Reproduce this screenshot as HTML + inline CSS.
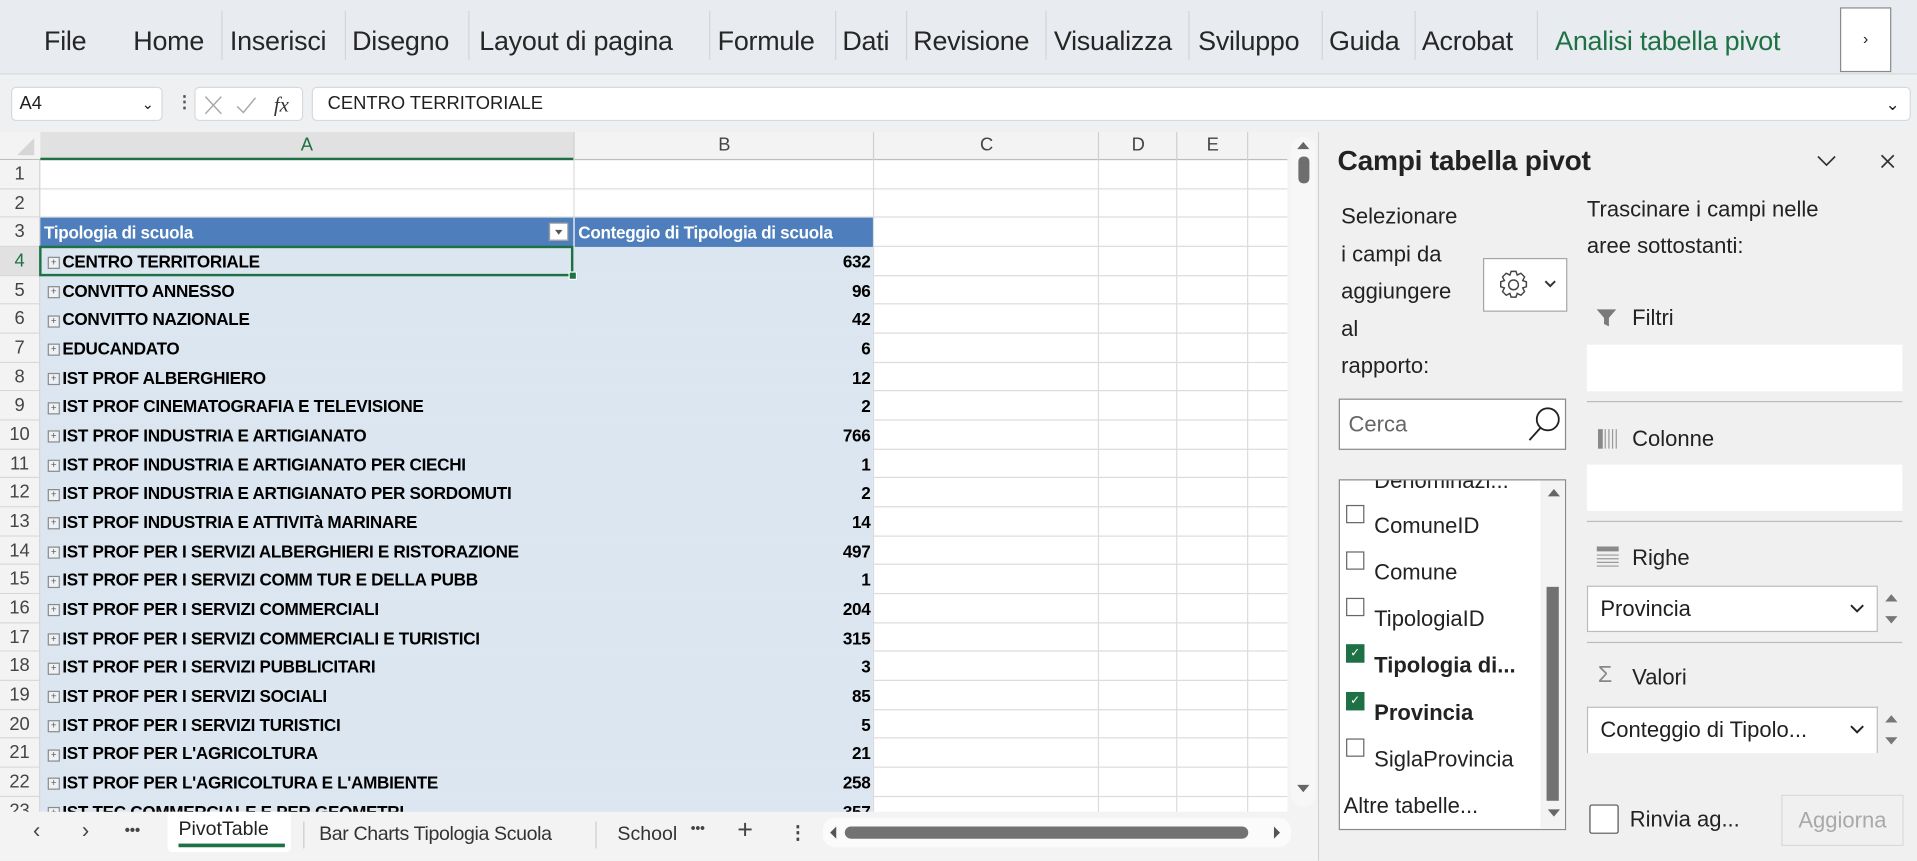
<!DOCTYPE html>
<html><head><meta charset="utf-8">
<style>
html,body{margin:0;padding:0;width:1917px;height:861px;overflow:hidden;background:#f0f0f0}
#w{position:absolute;left:0;top:0;width:1568px;height:704px;transform:scale(1.22258);transform-origin:0 0;font-family:"Liberation Sans",sans-serif;color:#1f1f1f}
.a{position:absolute}
.tab{position:absolute;top:21px;font-size:22px;color:#262626;white-space:nowrap;letter-spacing:-0.2px}
.sep{position:absolute;top:9px;width:1px;height:40px;background:#d2d5d9}
.rh{position:absolute;left:0;width:32px;text-align:center;font-size:15px;color:#444;height:23.67px;line-height:24px;border-bottom:1px solid #d8d8d8;box-sizing:border-box;background:#f3f3f3}
.gl{position:absolute;left:33px;width:1020px;height:1px;background:#dcdcdc}
.vl{position:absolute;top:131px;width:1px;height:533px;background:#dcdcdc}
.pr{position:absolute;left:33px;width:681px;height:23.67px;background:#dce6f1;box-sizing:border-box;font-weight:bold;font-size:14px;line-height:24px;letter-spacing:-0.25px;color:#000;white-space:nowrap}
.pr .p{display:inline-block;width:8px;height:8px;border:1px solid #8a8a8a;margin:0 2px 0 6px;position:relative;top:0px;background:#eef2f7;font-size:8px;line-height:8px;text-align:center;font-weight:normal;color:#555;letter-spacing:0;vertical-align:middle}
.pr .n{position:absolute;right:2px;top:0}
.pt{font-size:18px;color:#222;position:absolute;white-space:nowrap}
.cb{position:absolute;left:1101px;width:13px;height:13px;border:1px solid #666;background:#fff}
.cbc{background:#1e7145;border-color:#1e7145;color:#fff;font-size:10px;line-height:13px;text-align:center}
.fi{position:absolute;left:1124px;font-size:18px;color:#222;white-space:nowrap}
.box{position:absolute;background:#fff}
</style></head><body><div id="w">
<!-- ribbon -->
<div class="a" style="left:0;top:0;width:1568px;height:60px;background:#e8ebef;border-bottom:1px solid #d6d9dd"></div>
<div class="tab" style="left:36px">File</div>
<div class="tab" style="left:109px">Home</div><div class="sep" style="left:181px"></div>
<div class="tab" style="left:188px">Inserisci</div><div class="sep" style="left:282px"></div>
<div class="tab" style="left:288px">Disegno</div><div class="sep" style="left:383px"></div>
<div class="tab" style="left:392px">Layout di pagina</div><div class="sep" style="left:580px"></div>
<div class="tab" style="left:587px">Formule</div><div class="sep" style="left:683px"></div>
<div class="tab" style="left:689px">Dati</div><div class="sep" style="left:741px"></div>
<div class="tab" style="left:747px">Revisione</div><div class="sep" style="left:855px"></div>
<div class="tab" style="left:862px">Visualizza</div><div class="sep" style="left:972px"></div>
<div class="tab" style="left:980px">Sviluppo</div><div class="sep" style="left:1081px"></div>
<div class="tab" style="left:1087px">Guida</div><div class="sep" style="left:1157px"></div>
<div class="tab" style="left:1163px">Acrobat</div><div class="sep" style="left:1257px"></div>
<div class="tab" style="left:1272px;color:#1e7145">Analisi tabella pivot</div>
<div class="a" style="left:1505px;top:6px;width:42px;height:53px;background:#fff;border:1px solid #8a8a8a;box-sizing:border-box;text-align:center;line-height:50px;font-size:13px">›</div>
<!-- formula bar -->
<div class="a" style="left:0;top:61px;width:1568px;height:47px;background:#eef0f2"></div>
<div class="a" style="left:9px;top:71px;width:124px;height:28px;background:#fff;border:1px solid #d9d9d9;border-radius:4px;box-sizing:border-box;font-size:15px;line-height:26px;padding-left:6px">A4<span style="position:absolute;right:6px;top:0;font-size:12px">&#8964;</span></div>
<div class="a" style="left:144px;top:75px;font-size:14px;color:#555;font-weight:bold">⋮</div>
<div class="a" style="left:159px;top:71px;width:89px;height:28px;background:#fff;border:1px solid #d9d9d9;border-radius:4px;box-sizing:border-box"></div>
<svg class="a" style="left:165px;top:77px" width="80" height="18"><path d="M3 2l13 14M16 2L3 16" stroke="#a9a9a9" stroke-width="1.2" fill="none"/><path d="M29 10l5 5 10-12" stroke="#a9a9a9" stroke-width="1.2" fill="none"/><text x="59" y="14" font-family="Liberation Serif" font-style="italic" font-size="17" fill="#333">fx</text></svg>
<div class="a" style="left:255px;top:71px;width:1308px;height:28px;background:#fff;border:1px solid #d9d9d9;border-radius:4px;box-sizing:border-box;font-size:15px;line-height:26px;padding-left:12px">CENTRO TERRITORIALE<span style="position:absolute;right:8px;top:0;font-size:14px">&#8964;</span></div>
<!-- grid -->
<div class="a" style="left:0;top:108px;width:1055px;height:556px;background:#fff"></div>
<div class="a" style="left:0;top:108px;width:1055px;height:23px;background:#f3f3f3;border-bottom:1px solid #bdbdbd;box-sizing:border-box"></div>
<svg class="a" style="left:10px;top:111px" width="20" height="18"><path d="M18 2L18 16L4 16Z" fill="#d6d6d6"/></svg>
<div class="a" style="left:33px;top:108px;width:436px;height:23px;background:#e1e1e1;border-bottom:2px solid #1e7145;box-sizing:border-box;text-align:center;font-size:15px;line-height:22px;color:#1e7145">A</div>
<div class="a" style="left:469px;top:108px;width:245px;height:23px;text-align:center;font-size:15px;line-height:22px;color:#444;border-left:1px solid #d0d0d0">B</div>
<div class="a" style="left:714px;top:108px;width:184px;height:23px;text-align:center;font-size:15px;line-height:22px;color:#444;border-left:1px solid #d0d0d0">C</div>
<div class="a" style="left:898px;top:108px;width:64px;height:23px;text-align:center;font-size:15px;line-height:22px;color:#444;border-left:1px solid #d0d0d0">D</div>
<div class="a" style="left:962px;top:108px;width:58px;height:23px;text-align:center;font-size:15px;line-height:22px;color:#444;border-left:1px solid #d0d0d0">E</div>
<div class="a" style="left:1020px;top:108px;width:1px;height:23px;background:#d0d0d0"></div>
<div class="vl" style="left:469px"></div><div class="vl" style="left:714px"></div><div class="vl" style="left:898px"></div><div class="vl" style="left:962px"></div><div class="vl" style="left:1020px"></div>
<div class="a" style="left:32px;top:131px;width:1px;height:533px;background:#cfcfcf"></div>
<div id="rows"></div>
<!-- vertical scrollbar -->
<div class="a" style="left:1053px;top:108px;width:27px;height:556px;background:#f3f3f3"></div>
<div class="a" style="left:1056px;top:112px;width:20px;height:548px;background:#f7f7f7;border-radius:10px"></div>
<svg class="a" style="left:1059px;top:114px" width="14" height="10"><path d="M2 8L7 2L12 8Z" fill="#666"/></svg>
<div class="a" style="left:1062px;top:128px;width:9px;height:22px;background:#6e6e6e;border-radius:4px"></div>
<svg class="a" style="left:1059px;top:640px" width="14" height="10"><path d="M2 2L7 8L12 2Z" fill="#666"/></svg>
<div class="a" style="left:1078px;top:108px;width:1px;height:596px;background:#d0d0d0"></div>
<!-- sheet tabs -->
<div class="a" style="left:0;top:664px;width:1078px;height:40px;background:#f3f3f3"></div>
<div class="a" style="left:27px;top:669px;font-size:18px;color:#444">‹</div>
<div class="a" style="left:67px;top:669px;font-size:18px;color:#444">›</div>
<div class="a" style="left:102px;top:672px;font-size:12px;color:#444;font-weight:bold">•••</div>
<div class="a" style="left:137px;top:664px;width:101px;height:33px;background:#fff;border-radius:0 0 4px 4px"></div>
<div class="a" style="left:146px;top:670px;font-size:16px;color:#222">PivotTable</div>
<div class="a" style="left:146px;top:690px;width:87px;height:3px;background:#1e7145"></div>
<div class="a" style="left:248px;top:672px;width:1px;height:22px;background:#ccc"></div>
<div class="a" style="left:261px;top:674px;font-size:16px;color:#333;letter-spacing:-0.3px">Bar Charts Tipologia Scuola</div>
<div class="a" style="left:487px;top:672px;width:1px;height:22px;background:#ccc"></div>
<div class="a" style="left:505px;top:674px;font-size:16px;color:#333;width:50px;overflow:hidden">School</div>
<div class="a" style="left:565px;top:672px;font-size:11px;color:#444;font-weight:bold">•••</div>
<div class="a" style="left:603px;top:666px;font-size:22px;color:#444">+</div>
<div class="a" style="left:645px;top:672px;font-size:15px;color:#444;font-weight:bold">⋮</div>
<div class="a" style="left:673px;top:669px;width:383px;height:24px;background:#fbfbfb;border-radius:10px"></div>
<svg class="a" style="left:676px;top:674px" width="10" height="14"><path d="M8 2L3 7L8 12Z" fill="#555"/></svg>
<div class="a" style="left:691px;top:676px;width:330px;height:10px;background:#727272;border-radius:5px"></div>
<svg class="a" style="left:1040px;top:674px" width="10" height="14"><path d="M2 2L7 7L2 12Z" fill="#555"/></svg>
<!-- task pane -->
<div class="a" style="left:1079px;top:108px;width:489px;height:596px;background:#f0f0f0"></div>
<div class="a" style="left:1094px;top:118px;font-size:23px;color:#222;font-weight:bold;letter-spacing:-0.2px">Campi tabella pivot</div>
<svg class="a" style="left:1485px;top:126px" width="18" height="12"><path d="M2 2L9 9L16 2" stroke="#333" stroke-width="1.4" fill="none"/></svg>
<svg class="a" style="left:1537px;top:125px" width="14" height="14"><path d="M2 2L12 12M12 2L2 12" stroke="#333" stroke-width="1.4"/></svg>
<div class="a" style="left:1097px;top:162px;width:103px;overflow:hidden;font-size:18px;line-height:30.5px;color:#222;white-space:nowrap">Selezionare<br>i campi da<br>aggiungere<br>al<br>rapporto:</div>
<div class="a" style="left:1213px;top:211px;width:69px;height:44px;background:#fff;border:1px solid #a6a6a6;box-sizing:border-box"></div>
<svg class="a" style="left:1224px;top:220px" width="52" height="26"><g transform="translate(14,13)" fill="none" stroke="#444" stroke-width="1.2"><circle r="4"/><path d="M-2 -11h4l1 3 3-1.5 3 3-1.5 3 3 1v4l-3 1 1.5 3-3 3-3-1.5-1 3h-4l-1-3-3 1.5-3-3 1.5-3-3-1v-4l3-1-1.5-3 3-3 3 1.5z"/></g><path d="M40 10l4 4 4-4" stroke="#333" stroke-width="1.6" fill="none"/></svg>
<div class="a" style="left:1298px;top:156px;font-size:18px;line-height:30px;color:#222">Trascinare i campi nelle<br>aree sottostanti:</div>
<svg class="a" style="left:1305px;top:252px" width="18" height="16"><path d="M1 1H17L11 8V15L7 13V8Z" fill="#7a7a7a"/></svg>
<div class="pt" style="left:1335px;top:250px">Filtri</div>
<div class="box" style="left:1298px;top:282px;width:258px;height:38px"></div>
<div class="a" style="left:1298px;top:328px;width:258px;height:1px;background:#bcbcbc"></div>
<svg class="a" style="left:1307px;top:350px" width="18" height="18"><rect x="0" y="1" width="4" height="16" fill="#8a8a8a"/><path d="M6 1v16M9 1v16M12 1v16M15 1v16" stroke="#9a9a9a" stroke-width="1"/></svg>
<div class="pt" style="left:1335px;top:349px">Colonne</div>
<div class="box" style="left:1298px;top:380px;width:258px;height:38px"></div>
<div class="a" style="left:1298px;top:426px;width:258px;height:1px;background:#bcbcbc"></div>
<svg class="a" style="left:1306px;top:447px" width="19" height="18"><rect x="0" y="0" width="18" height="4" fill="#8a8a8a"/><path d="M0 7h18M0 10h18M0 13h18M0 16h18" stroke="#9a9a9a"/></svg>
<div class="pt" style="left:1335px;top:446px">Righe</div>
<div class="box" style="left:1298px;top:479px;width:238px;height:38px;border:1px solid #bcbcbc;box-sizing:border-box;font-size:18px;line-height:36px;padding-left:10px">Provincia<svg style="position:absolute;right:10px;top:14px" width="12" height="8"><path d="M1 1l5 5 5-5" stroke="#222" stroke-width="1.6" fill="none"/></svg></div>
<svg class="a" style="left:1540px;top:484px" width="14" height="30"><path d="M2 8L7 2L12 8Z M2 20L7 26L12 20Z" fill="#777"/></svg>
<div class="a" style="left:1298px;top:525px;width:258px;height:1px;background:#bcbcbc"></div>
<div class="a" style="left:1307px;top:542px;font-size:19px;color:#888">Σ</div>
<div class="pt" style="left:1335px;top:544px">Valori</div>
<div class="box" style="left:1298px;top:578px;width:238px;height:38px;border:1px solid #bcbcbc;border-bottom:none;box-sizing:border-box;font-size:18px;line-height:36px;padding-left:10px">Conteggio di Tipolo...<svg style="position:absolute;right:10px;top:14px" width="12" height="8"><path d="M1 1l5 5 5-5" stroke="#222" stroke-width="1.6" fill="none"/></svg></div>
<svg class="a" style="left:1540px;top:583px" width="14" height="30"><path d="M2 8L7 2L12 8Z M2 20L7 26L12 20Z" fill="#777"/></svg>
<div class="a" style="left:1300px;top:658px;width:24px;height:24px;border:1px solid #555;border-radius:2px;background:#fff;box-sizing:border-box"></div>
<div class="pt" style="left:1333px;top:660px">Rinvia ag...</div>
<div class="a" style="left:1457px;top:650px;width:100px;height:42px;border:1px solid #dadada;box-sizing:border-box;font-size:18px;line-height:40px;text-align:center;color:#a9a9a9">Aggiorna</div>
<div class="box" style="left:1095px;top:326px;width:186px;height:42px;border:1px solid #8a8a8a;box-sizing:border-box;font-size:18px;line-height:40px;padding-left:7px;color:#666">Cerca<svg style="position:absolute;right:2px;top:4px" width="30" height="32"><circle cx="18" cy="12" r="9" stroke="#222" stroke-width="1.5" fill="none"/><path d="M12 19L3 29" stroke="#222" stroke-width="1.5"/></svg></div>
<div class="box" style="left:1095px;top:392px;width:186px;height:287px;border:1px solid #8a8a8a;box-sizing:border-box;overflow:hidden"></div>
<div class="a" style="left:1096px;top:393px;width:184px;height:285px;overflow:hidden">
<div class="a" style="left:28px;top:-10px;font-size:18px;color:#222">Denominazi...</div>
</div>
<div class="a" style="left:1260px;top:393px;width:20px;height:285px;background:#f3f3f3"></div>
<svg class="a" style="left:1264px;top:398px" width="14" height="10"><path d="M2 8L7 2L12 8Z" fill="#666"/></svg>
<div class="a" style="left:1265px;top:480px;width:10px;height:175px;background:#727272"></div>
<svg class="a" style="left:1264px;top:660px" width="14" height="10"><path d="M2 2L7 8L12 2Z" fill="#666"/></svg>
<div class="cb" style="top:413px"></div><div class="fi" style="top:420px">ComuneID</div>
<div class="cb" style="top:451px"></div><div class="fi" style="top:458px">Comune</div>
<div class="cb" style="top:489px"></div><div class="fi" style="top:496px">TipologiaID</div>
<div class="cb cbc" style="top:527px">✓</div><div class="fi" style="top:534px;font-weight:bold">Tipologia di...</div>
<div class="cb cbc" style="top:566px">✓</div><div class="fi" style="top:573px;font-weight:bold">Provincia</div>
<div class="cb" style="top:604px"></div><div class="fi" style="top:611px">SiglaProvincia</div>
<div class="fi" style="left:1099px;top:649px">Altre tabelle...</div>
</div>
<script>
var d=[["CENTRO TERRITORIALE",632],["CONVITTO ANNESSO",96],["CONVITTO NAZIONALE",42],["EDUCANDATO",6],["IST PROF ALBERGHIERO",12],["IST PROF CINEMATOGRAFIA E TELEVISIONE",2],["IST PROF INDUSTRIA E ARTIGIANATO",766],["IST PROF INDUSTRIA E ARTIGIANATO PER CIECHI",1],["IST PROF INDUSTRIA E ARTIGIANATO PER SORDOMUTI",2],["IST PROF INDUSTRIA E ATTIVITà MARINARE",14],["IST PROF PER I SERVIZI ALBERGHIERI E RISTORAZIONE",497],["IST PROF PER I SERVIZI COMM TUR E DELLA PUBB",1],["IST PROF PER I SERVIZI COMMERCIALI",204],["IST PROF PER I SERVIZI COMMERCIALI E TURISTICI",315],["IST PROF PER I SERVIZI PUBBLICITARI",3],["IST PROF PER I SERVIZI SOCIALI",85],["IST PROF PER I SERVIZI TURISTICI",5],["IST PROF PER L'AGRICOLTURA",21],["IST PROF PER L'AGRICOLTURA E L'AMBIENTE",258],["IST TEC COMMERCIALE E PER GEOMETRI",357]];
var h="",H=23.67;
for(var r=1;r<=23;r++){var t=131+(r-1)*H;if(t>664)break;
var sel=r==4;
h+='<div class="rh" style="top:'+t+'px;'+(sel?'background:#e1e1e1;color:#1e7145;':'')+'">'+r+'</div>';
h+='<div class="gl" style="top:'+(t+H-1)+'px"></div>';}
var t3=131+2*H;
h+='<div class="a" style="left:33px;top:'+t3+'px;width:681px;height:'+H+'px;background:#4e7fbc;color:#fff;font-weight:bold;font-size:14px;line-height:24px;letter-spacing:-0.25px;white-space:nowrap"><span style="position:absolute;left:3px">Tipologia di scuola</span><span style="position:absolute;left:416px;top:4px;width:16px;height:15px;background:#fff;border:1px solid #999;box-sizing:border-box"><svg width="14" height="13" style="position:absolute;left:0;top:0"><path d="M4 5h6L7 9z" fill="#555"/></svg></span><span style="position:absolute;left:436px;border-left:1px solid #fff;padding-left:3px">Conteggio di Tipologia di scuola</span></div>';
for(var i=0;i<d.length;i++){var t=131+(i+3)*H;
h+='<div class="pr" style="top:'+t+'px"><span class="p">+</span>'+d[i][0]+'<span class="n">'+d[i][1]+'</span></div>';}
var t4=131+3*H;
h+='<div class="a" style="left:32px;top:'+(t4-1)+'px;width:437px;height:'+(H+1)+'px;border:2px solid #1e7145;box-sizing:border-box"></div><div class="a" style="left:465px;top:'+(t4+H-4)+'px;width:5px;height:5px;background:#1e7145;border:1px solid #fff"></div>';
document.getElementById("rows").outerHTML=h;
</script>
</body></html>
